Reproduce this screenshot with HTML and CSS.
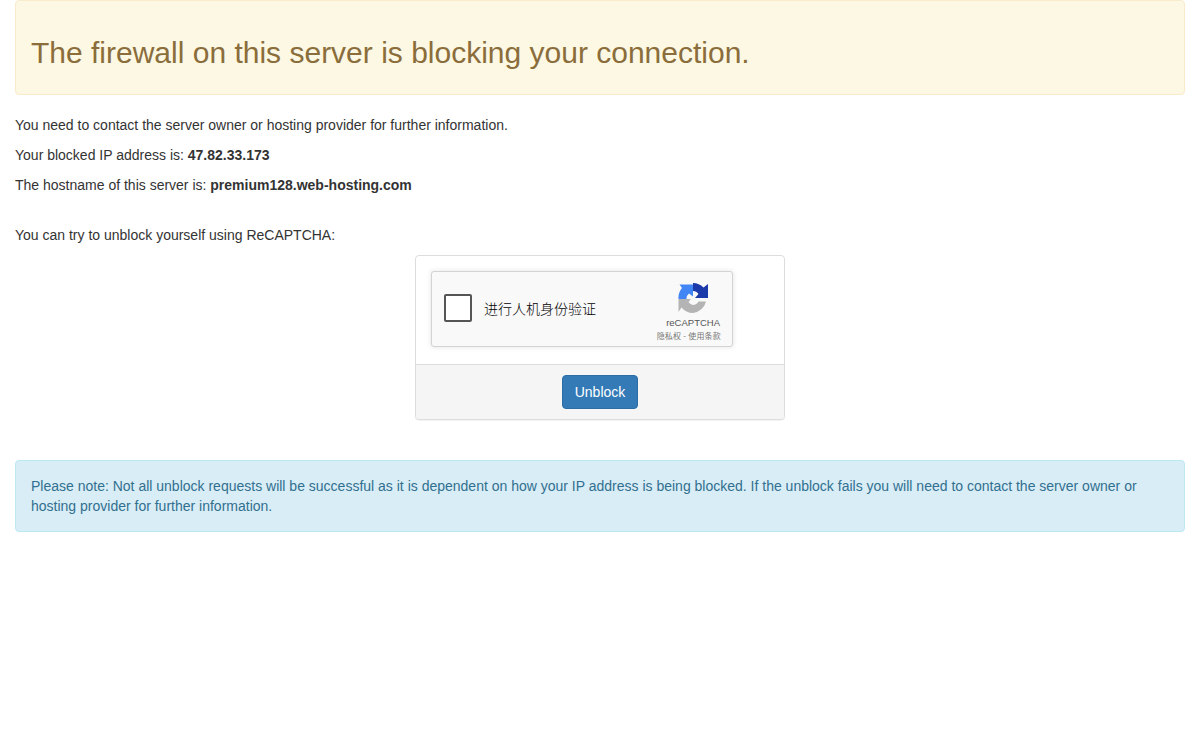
FILE: index.html
```html
<!DOCTYPE html>
<html lang="en">
<head>
<meta charset="utf-8">
<title>Blocked</title>
<link rel="stylesheet" href="styles.css">
</head>
<body>
<div class="container">
  <div class="alert alert-warning"><h2>The firewall on this server is blocking your connection.</h2></div>
  <p>You need to contact the server owner or hosting provider for further information.</p>
  <p>Your blocked IP address is: <strong>47.82.33.173</strong></p>
  <p>The hostname of this server is: <strong>premium128.web-hosting.com</strong></p>
  <p class="spaced">You can try to unblock yourself using ReCAPTCHA:</p>
  <div class="panel">
    <div class="panel-body">
      <div class="captcha">
        <span class="checkbox"></span>
        <span class="captcha-label">进行人机身份验证</span>
        <div class="captcha-brand">
          <svg class="captcha-logo" viewBox="0 0 30 30" width="30" height="30" aria-hidden="true">
            <path fill="#b4b4b4" d="M15 30A15 15 0 0 1 3.500 24.500L0.500 29V16H13L10.500 19A6.500 6.500 0 0 0 15 22A7 7 0 0 0 20.500 18.500L28 18.500A15 15 0 0 1 15 30Z"/>
            <path fill="#4285f4" d="M0.500 16A15 15 0 0 1 4 5L1.500 1.500H15V13.500L11 10.500A6.500 6.500 0 0 0 8.500 16Z"/>
            <path fill="#1c3aa9" d="M15 0A15 15 0 0 1 25.500 4.500L30 1V15H17L20.500 11A6.500 6.500 0 0 0 15 8Z"/>
          </svg>
          <span class="captcha-name">reCAPTCHA</span>
          <span class="captcha-links">隐私权 - 使用条款</span>
        </div>
      </div>
    </div>
    <div class="panel-footer"><button class="btn" type="button">Unblock</button></div>
  </div>
  <div class="alert alert-info">Please note: Not all unblock requests will be successful as it is dependent on how your IP address is being blocked. If the unblock fails you will need to contact the server owner or hosting provider for further information.</div>
</div>
</body>
</html>
```

FILE: styles.css
```css
* { box-sizing: border-box; }
html, body { margin: 0; padding: 0; background: #fff; }
body {
  font-family: "Liberation Sans", Arial, "Noto Sans CJK SC", sans-serif;
  font-size: 14px;
  line-height: 20px;
  color: #333;
}
.container { padding: 0 15px; }
.alert {
  padding: 15px;
  margin-bottom: 20px;
  border: 1px solid transparent;
  border-radius: 4px;
}
.alert-warning { background: #fcf8e3; border-color: #faebcc; color: #8a6d3b; }
.alert-warning h2 {
  margin: 20px 0 10px;
  font-size: 30px;
  font-weight: 500;
  line-height: 33px;
}
.alert-info { background: #d9edf7; border-color: #bce8f1; color: #31708f; }
p { margin: 0 0 10px; }
.spaced { margin-top: 30px; }
.panel {
  width: 370px;
  margin: 0 auto 40px;
  background: #fff;
  border: 1px solid #ddd;
  border-radius: 4px;
  box-shadow: 0 1px 1px rgba(0, 0, 0, .05);
}
.panel-body { padding: 15px 15px 17px; }
.panel-footer {
  display: flex;
  justify-content: center;
  padding: 10px 15px;
  background: #f5f5f5;
  border-top: 1px solid #ddd;
  border-radius: 0 0 3px 3px;
}
.btn {
  height: 34px;
  padding: 6px 12px;
  font: inherit;
  color: #fff;
  background: #337ab7;
  border: 1px solid #2e6da4;
  border-radius: 4px;
}
.captcha {
  display: flex;
  align-items: flex-start;
  width: 302px;
  height: 76px;
  padding-right: 11px;
  background: #f9f9f9;
  border: 1px solid #d3d3d3;
  border-radius: 3px;
  box-shadow: 0 0 4px 1px rgba(0, 0, 0, .08);
}
.checkbox {
  flex: none;
  width: 28px;
  height: 28px;
  margin: 22px 12px 0 12px;
  background: #fff;
  border: 2px solid #555;
  border-radius: 2px;
}
.captcha-label {
  flex: 1;
  margin-top: 27px;
  font-family: "Noto Sans CJK SC", sans-serif;
  font-size: 14px;
  font-weight: 300;
  line-height: 18px;
  color: #000;
}
.captcha-brand {
  display: flex;
  flex-direction: column;
  align-items: flex-end;
  padding-top: 11px;
}
.captcha-logo { display: block; margin-right: 13px; }
.captcha-name {
  margin-top: 3px;
  margin-right: 1px;
  font-size: 9.5px;
  line-height: 13px;
  color: #555;
}
.captcha-links {
  font-family: "Noto Sans CJK SC", sans-serif;
  margin-top: 0;
  font-size: 8px;
  letter-spacing: 0.2px;
  line-height: 13px;
  color: #777;
  white-space: nowrap;
}
```
